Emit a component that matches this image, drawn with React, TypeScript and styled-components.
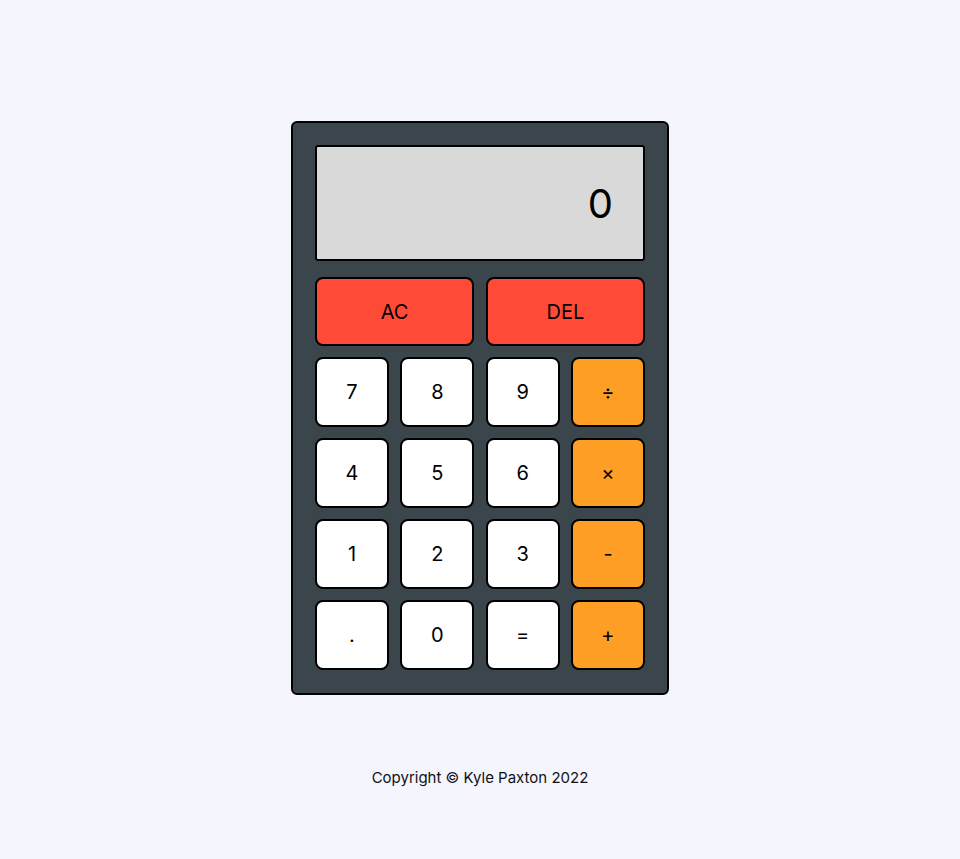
import React from "react";
import styled, { createGlobalStyle } from "styled-components";

const Global = createGlobalStyle`
  html, body { margin: 0; padding: 0; }
  body {
    background: #f5f5fe;
    font-family: "Inter", "Noto Sans", sans-serif;
    color: #000;
  }
`;

const Page = styled.main`
  min-height: 859px;
  display: flex;
  flex-direction: column;
  align-items: center;
  padding-top: 121px;
  box-sizing: border-box;
`;

const Calculator = styled.div`
  width: 378px;
  box-sizing: border-box;
  background: #3b464c;
  border: 2px solid #000;
  border-radius: 6px;
  padding: 22px 22px 23px 22px;
  display: flex;
  flex-direction: column;
`;

const Display = styled.div`
  height: 116px;
  box-sizing: border-box;
  background: #d9d9d9;
  border: 2px solid #000;
  border-radius: 3px;
  display: flex;
  align-items: center;
  justify-content: flex-end;
  padding-right: 30px;
  font-size: 40px;
  margin-bottom: 16px;
`;

const TopRow = styled.div`
  display: flex;
  justify-content: space-between;
  margin-bottom: 11px;
`;

const Keys = styled.div`
  display: grid;
  grid-template-columns: repeat(4, 74px);
  justify-content: space-between;
  row-gap: 11px;
`;

type Kind = "num" | "op" | "clear";
const colors: Record<Kind, string> = {
  num: "#ffffff",
  op: "#ff9e24",
  clear: "#ff4a38",
};

const Key = styled.button<{ $kind: Kind; $wide?: boolean }>`
  width: ${(p) => (p.$wide ? "159px" : "74px")};
  height: ${(p) => (p.$wide ? "69px" : "70px")};
  box-sizing: border-box;
  background: ${(p) => colors[p.$kind]};
  border: 2px solid #000;
  border-radius: 8px;
  font-family: "Inter", "Noto Sans", sans-serif;
  font-size: 20px;
  color: #000;
  display: flex;
  align-items: center;
  justify-content: center;
  padding: 0;
  cursor: pointer;
`;

const Footer = styled.footer`
  margin-top: 73px;
  font-size: 15px;
  line-height: 19px;
  color: #111;
`;

const rows: [string, Kind][][] = [
  [["7", "num"], ["8", "num"], ["9", "num"], ["÷", "op"]],
  [["4", "num"], ["5", "num"], ["6", "num"], ["×", "op"]],
  [["1", "num"], ["2", "num"], ["3", "num"], ["-", "op"]],
  [[".", "num"], ["0", "num"], ["=", "num"], ["+", "op"]],
];

export default function App() {
  return (
    <>
      <Global />
      <Page>
        <Calculator>
          <Display>0</Display>
          <TopRow>
            <Key $kind="clear" $wide>AC</Key>
            <Key $kind="clear" $wide>DEL</Key>
          </TopRow>
          <Keys>
            {rows.flat().map(([label, kind], i) => (
              <Key key={i} $kind={kind}>{label}</Key>
            ))}
          </Keys>
        </Calculator>
        <Footer>Copyright © Kyle Paxton 2022</Footer>
      </Page>
    </>
  );
}
